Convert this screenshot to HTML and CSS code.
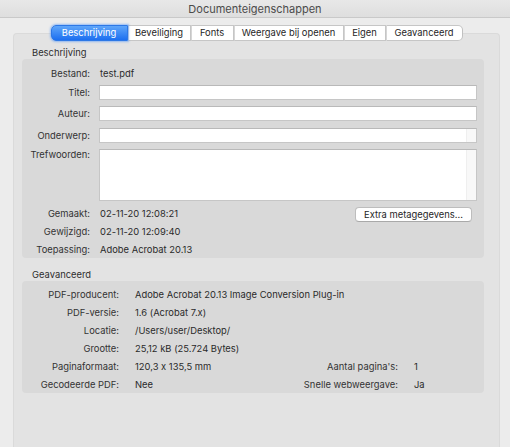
FILE: index.html
```html
<!DOCTYPE html>
<html lang="nl">
<head>
<meta charset="utf-8">
<title>Documenteigenschappen</title>
<link rel="stylesheet" href="styles.css">
</head>
<body>
<div class="window">
  <div class="titlebar">Documenteigenschappen</div>
  <div class="content">
    <div class="tabs">
      <div class="tab active t-besch">Beschrijving</div>
      <div class="tab t-bev">Beveiliging</div>
      <div class="tab t-fonts">Fonts</div>
      <div class="tab t-weer">Weergave bij openen</div>
      <div class="tab t-eigen">Eigen</div>
      <div class="tab last t-geav">Geavanceerd</div>
    </div>
    <div class="panel">
      <div class="section-title">Beschrijving</div>
      <div class="box desc">
        <div class="row text first"><span class="label">Bestand:</span><span class="value">test.pdf</span></div>
        <div class="row field r-titel"><span class="label">Titel:</span><div class="input"></div></div>
        <div class="row field r-auteur"><span class="label">Auteur:</span><div class="input"></div></div>
        <div class="row field r-onderwerp"><span class="label">Onderwerp:</span><div class="input scroll"></div></div>
        <div class="row area"><span class="label">Trefwoorden:</span><div class="input textarea scroll"></div></div>
        <div class="row text r-gemaakt"><span class="label">Gemaakt:</span><span class="value">02-11-20 12:08:21</span><button class="btn">Extra metagegevens...</button></div>
        <div class="row text"><span class="label">Gewijzigd:</span><span class="value">02-11-20 12:09:40</span></div>
        <div class="row text"><span class="label">Toepassing:</span><span class="value">Adobe Acrobat 20.13</span></div>
      </div>
      <div class="section-title second">Geavanceerd</div>
      <div class="box adv">
        <span class="label">PDF-producent:</span><span class="value wide">Adobe Acrobat 20.13 Image Conversion Plug-in</span>
        <span class="label">PDF-versie:</span><span class="value wide">1.6 (Acrobat 7.x)</span>
        <span class="label">Locatie:</span><span class="value wide">/Users/user/Desktop/</span>
        <span class="label">Grootte:</span><span class="value wide">25,12 kB (25.724 Bytes)</span>
        <span class="label">Paginaformaat:</span><span class="value">120,3 x 135,5 mm</span><span class="label">Aantal pagina's:</span><span class="value">1</span>
        <span class="label">Gecodeerde PDF:</span><span class="value">Nee</span><span class="label">Snelle webweergave:</span><span class="value">Ja</span>
      </div>
    </div>
  </div>
</div>
</body>
</html>
```

FILE: styles.css
```css
html, body {
  margin: 0;
  padding: 0;
}
body {
  width: 510px;
  height: 447px;
  overflow: hidden;
  background: #ececec;
  font-family: "Inter", "Liberation Sans", sans-serif;
  font-size: 9.4px;
  font-feature-settings: "calt" 0;
  color: #2a2a2a;
}
.window {
  width: 510px;
  height: 447px;
  overflow: hidden;
}
.titlebar {
  height: 17px;
  line-height: 19px;
  border-bottom: 1px solid #c9c9c9;
  background: linear-gradient(#e8e8e8, #dedede);
  text-align: center;
  font-size: 11px;
  color: #4b4b4b;
}
.content {
  padding: 7px 10px 0 13px;
}
.tabs {
  display: flex;
  justify-content: center;
  height: 16px;
  position: relative;
  z-index: 1;
}
.tab {
  box-sizing: border-box;
  height: 16px;
  line-height: 14px;
  padding: 0;
  text-align: center;
  background: #ffffff;
  border: 1px solid #c6c6c6;
  border-left: 1px solid #d6d6d6;
  color: #262626;
  white-space: nowrap;
}
.t-besch { width: 77px; }
.t-bev { width: 63px; }
.t-fonts { width: 43px; }
.t-weer { width: 110px; }
.t-eigen { width: 42px; }
.t-geav { width: 77px; }
.tab.active {
  background: linear-gradient(#5fa6fa, #1c6ff0);
  color: #ffffff;
  border: 1px solid #2d78e6;
  border-radius: 5px 0 0 5px;
  box-shadow: 0 0 2px 1px rgba(80, 150, 250, 0.55);
  position: relative;
}
.tab.last {
  border-radius: 0 5px 5px 0;
  border-right-color: #c0c0c0;
}
.panel {
  margin-top: -8px;
  height: 400px;
  background: #e3e3e3;
  border: 1px solid #dadada;
  border-bottom: none;
  border-radius: 4px 4px 0 0;
  padding: 13px 15px 0 8px;
}
.section-title {
  line-height: 12px;
  height: 12px;
  padding-left: 10px;
  color: #2e2e2e;
}
.section-title.second {
  margin-top: 11px;
}
.box {
  background: #d9d9d9;
  border-radius: 4px;
}
.desc {
  height: 199px;
  padding-top: 5px;
  box-sizing: border-box;
  display: flex;
  flex-direction: column;
}
.row {
  display: flex;
  align-items: center;
}
.row .label {
  flex: none;
  width: 68px;
  text-align: right;
  margin-right: 9px;
  color: #333333;
}
.row .value {
  padding-left: 1px;
}
.row.text {
  height: 18px;
}
.row.field {
  height: 15px;
}
.r-titel { margin-top: 3px; }
.r-auteur { margin-top: 6px; }
.r-onderwerp { margin-top: 7px; }
.row.area {
  margin-top: 6px;
  align-items: flex-start;
}
.row.area .label {
  line-height: 12px;
}
.r-gemaakt { margin-top: 3px; }
.input {
  flex: none;
  box-sizing: border-box;
  width: 378px;
  height: 15px;
  background: #ffffff;
  border: 1px solid #c6c6c6;
  border-top-color: #b9b9b9;
  position: relative;
}
.input.textarea {
  height: 52px;
}
.input.scroll::after {
  content: "";
  position: absolute;
  top: 0;
  right: 0;
  bottom: 0;
  width: 9px;
  border-left: 1px solid #efefef;
  background: #f8f8f8;
}
.btn {
  margin-left: auto;
  margin-right: 12px;
  align-self: flex-end;
  width: 117px;
  height: 15px;
  padding: 0;
  box-sizing: border-box;
  background: #ffffff;
  border: 1px solid #bdbdbd;
  border-bottom-color: #a9a9a9;
  border-radius: 4px;
  font-family: inherit;
  font-size: 9.4px;
  line-height: 13px;
  color: #262626;
}
.adv {
  height: 112px;
  box-sizing: border-box;
  padding-top: 4px;
  display: grid;
  grid-template-columns: 97px 1fr auto 70px;
  grid-auto-rows: 18px;
  column-gap: 16px;
  align-items: center;
}
.adv .label {
  text-align: right;
  color: #333333;
  white-space: nowrap;
}
.adv .value {
  white-space: nowrap;
}
.adv .wide {
  grid-column: 2 / -1;
}
```
